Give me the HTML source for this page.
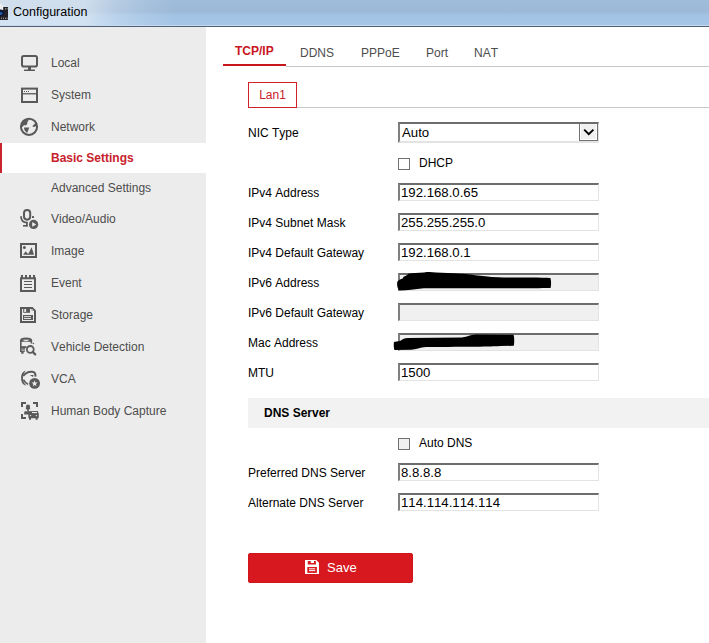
<!DOCTYPE html>
<html>
<head>
<meta charset="utf-8">
<title>Configuration</title>
<style>
*{box-sizing:border-box;margin:0;padding:0}
html,body{width:709px;height:643px;overflow:hidden;background:#fff}
body{font-family:"Liberation Sans",sans-serif;font-size:12px;color:#000;position:relative;font-kerning:none;font-feature-settings:"kern" 0}
#title{position:absolute;left:0;top:0;width:709px;height:26px;background:linear-gradient(to bottom,#9fbcda 0%,#9cb9d8 46%,#a3c3e4 58%,#a5c6e7 100%);}
#title .glow{position:absolute;left:0;top:0;width:200px;height:26px;background:linear-gradient(to right,rgba(255,255,255,.52) 0,rgba(255,255,255,.5) 85px,rgba(255,255,255,.25) 115px,rgba(255,255,255,.1) 145px,rgba(255,255,255,0) 175px)}
#title .txt{position:absolute;left:13px;top:4.5px;font-size:12.5px;line-height:15px;color:#000}
#titleline{position:absolute;left:0;top:25px;width:709px;height:2px;background:linear-gradient(to bottom,#c9daec 0,#c9daec 50%,#4f6178 50%,#4f6178 100%)}
#side{position:absolute;left:0;top:27px;width:206px;height:616px;background:#ececec}
.mi{position:absolute;left:51px;font-size:12px;color:#4d4d4d;line-height:14px;white-space:nowrap}
.sel{position:absolute;left:0;top:143px;width:206px;height:30px;background:#fff;border-left:2px solid #c9232b}
.ico{position:absolute;left:20px;width:20px;height:20px}
#main{position:absolute;left:206px;top:27px;width:503px;height:616px;background:#fff}
.tab{position:absolute;top:46px;font-size:12px;color:#4d4d4d;line-height:14px}
.lbl{position:absolute;left:248px;font-size:12px;color:#000;line-height:14px;white-space:nowrap}
.inp{position:absolute;left:398px;width:201px;height:18px;border:1px solid #e3e3e3;border-top:2px solid #6d6d6d;border-left:2px solid #7f7f7f;background:#fff;font-size:13.2px;line-height:15px;padding-left:1px;color:#000;white-space:nowrap}
.inp.dis{background:#f0f0f0}
.cb{position:absolute;left:398px;width:12px;height:12px;border:1px solid #707070;background:#fff}
</style>
</head>
<body>
<div id="title"><div class="glow"></div>
<svg width="10" height="26" viewBox="0 0 10 26" style="position:absolute;left:0;top:0">
<rect x="0" y="7" width="8" height="13" fill="#222224"/>
<rect x="5" y="8" width="1" height="1.5" fill="#8a8a8a"/><rect x="6.6" y="8" width="1" height="1.5" fill="#8a8a8a"/>
<rect x="1" y="17.6" width="1" height="1.5" fill="#8a8a8a"/><rect x="3" y="17.6" width="1" height="1.5" fill="#8a8a8a"/><rect x="5" y="17.6" width="1" height="1.5" fill="#8a8a8a"/><rect x="6.6" y="17.6" width="1" height="1.5" fill="#8a8a8a"/>
<path d="M0,3.6 Q2.8,4 3.2,7 L3.2,10.6 L0,10.6 Z" fill="#ededf0"/>
<ellipse cx="0.4" cy="12.8" rx="3.8" ry="3.2" fill="#0b1a38"/>
<ellipse cx="0.2" cy="13.6" rx="2.3" ry="1.3" fill="#2a62b5"/>
</svg>
<div class="txt">Configuration</div></div>
<div id="titleline"></div>
<div id="side">
</div>
<div class="sel"></div>
<div class="mi" style="top:56px">Local</div>
<div class="mi" style="top:88px">System</div>
<div class="mi" style="top:120px">Network</div>
<div class="mi" style="top:151px;color:#c8202a;font-weight:bold">Basic Settings</div>
<div class="mi" style="top:181px">Advanced Settings</div>
<div class="mi" style="top:212px">Video/Audio</div>
<div class="mi" style="top:244px">Image</div>
<div class="mi" style="top:276px">Event</div>
<div class="mi" style="top:308px">Storage</div>
<div class="mi" style="top:340px">Vehicle Detection</div>
<div class="mi" style="top:372px">VCA</div>
<div class="mi" style="top:404px">Human Body Capture</div>


<svg id="icons" width="206" height="643" viewBox="0 0 206 643" style="position:absolute;left:0;top:0">
<g fill="#595959" stroke="none">
<!-- Local -->
<rect x="22" y="56" width="15" height="10.5" rx="1.8" fill="none" stroke="#595959" stroke-width="2"/>
<rect x="28" y="67" width="3" height="3"/>
<rect x="24" y="69.5" width="11" height="1.6" rx="0.6"/>
<!-- System -->
<rect x="22" y="88.6" width="15" height="13.4" fill="none" stroke="#595959" stroke-width="2"/>
<rect x="22" y="93.1" width="15" height="1.3"/>
<rect x="24" y="91" width="1" height="1"/><rect x="26" y="91" width="1" height="1"/><rect x="28" y="91" width="1" height="1"/>
<!-- Network -->
<circle cx="29" cy="126.8" r="8.1" fill="none" stroke="#595959" stroke-width="2"/>
<path d="M21.5,126.5 L22,122.5 L24.5,119.8 L28.3,118.8 L28.6,120.2 L27.4,122 L27.2,124 L25.8,125.4 L24,125 L22.5,127 Z"/>
<path d="M24,127.6 L29.4,127.4 L28.6,129.2 L27.3,132.8 L26.2,132.2 L24.4,130 Z"/>
<path d="M32.3,126.2 L34.2,124.2 L36.2,122.2 L37,124.5 L35.6,126.4 L33.6,126.9 Z"/>
<!-- Video/Audio -->
<rect x="24" y="210" width="6.2" height="9.7" rx="3.1" fill="none" stroke="#595959" stroke-width="2"/>
<path d="M21,216.2 C21,220.6 24,222.6 27.6,222.6" fill="none" stroke="#595959" stroke-width="1.8"/>
<rect x="26" y="222" width="1.7" height="4.4"/>
<rect x="23" y="225" width="4.6" height="1.6"/>
<rect x="32" y="216.1" width="2" height="1.9"/>
<circle cx="33.6" cy="224.4" r="4.6"/>
<path d="M32.2,222 L36.2,224.4 L32.2,226.8 Z" fill="#ececec"/>
<!-- Image -->
<rect x="21" y="244" width="15" height="13" fill="none" stroke="#595959" stroke-width="2"/>
<circle cx="24.4" cy="247.4" r="1.5"/>
<path d="M23,254.8 L25.8,251.2 L27.4,253.4 L28.6,253.4 L31.6,247.2 L34,254.8 Z"/>
<!-- Event -->
<rect x="21" y="278.3" width="14" height="12.7" fill="none" stroke="#595959" stroke-width="2"/>
<rect x="21" y="275" width="2" height="3"/><rect x="25" y="275" width="2" height="3"/><rect x="29" y="275" width="2" height="3"/><rect x="33" y="275" width="2" height="3"/>
<rect x="24" y="281" width="8" height="1"/><rect x="24" y="284" width="8" height="1"/><rect x="24" y="287" width="8" height="1"/>
<!-- Storage -->
<path d="M21,308 L32.2,308 L35,310.8 L35,322 L21,322 Z" fill="none" stroke="#595959" stroke-width="2"/>
<rect x="23.2" y="308" width="6.8" height="4.8"/>
<rect x="24.2" y="309" width="1.9" height="3" fill="#e4e4e4"/>
<rect x="31.2" y="309.2" width="1.8" height="1.6" fill="#b0b0b0"/>
<rect x="23" y="315" width="10" height="5"/>
<rect x="24" y="316.2" width="7" height="0.9" fill="#ececec"/><rect x="24" y="318.1" width="7" height="0.9" fill="#ececec"/>
<!-- Vehicle detection -->
<path d="M20.8,352 L20.8,340.6 Q20.8,338.6 26,338.4 Q31.4,338.6 31.4,340.6 L31.4,343.6" fill="none" stroke="#595959" stroke-width="1.6"/>
<rect x="20.5" y="339.6" width="11" height="2.2"/>
<ellipse cx="26" cy="340.6" rx="2.8" ry="0.6" fill="#ececec"/>
<rect x="20.5" y="346.2" width="6" height="1.8"/>
<path d="M21,348 L25.4,348 L24.6,350.4 L21,349.2 Z" fill="#7a7a7a"/>
<rect x="20.8" y="350.6" width="4" height="1.3"/>
<rect x="21.2" y="351.5" width="2.4" height="2.2"/>
<circle cx="30.3" cy="349.4" r="3.4" fill="none" stroke="#595959" stroke-width="1.8"/>
<path d="M32.8,352 L35.2,354.4" stroke="#595959" stroke-width="2.2" stroke-linecap="round"/>
<circle cx="33.4" cy="343.5" r="0.8"/>
<!-- VCA -->
<path d="M25.6,370.7 C22.4,371.2 21,374.6 21.1,378.3 C21.2,382 22.6,385.2 26.4,385.6 C24.2,383.6 22.9,381.2 22.9,378.2 C22.9,375.4 23.9,372.9 25.6,370.7 Z"/>
<path d="M23.4,379.6 C24.4,381.6 26,383.2 28.2,384.4" fill="none" stroke="#595959" stroke-width="1.6"/>
<path d="M23.2,376 C25,373.4 28.4,371.5 32,371.7 C34.8,371.9 35.9,374 35.3,376.6" fill="none" stroke="#595959" stroke-width="2"/>
<path d="M29.8,375 L33.6,375 L33,377 Z"/>
<circle cx="34.6" cy="383.4" r="5.4"/>
<path d="M34.6,380.3 L35.4,382.5 L37.7,382.6 L35.9,384 L36.5,386.2 L34.6,384.9 L32.7,386.2 L33.3,384 L31.5,382.6 L33.8,382.5 Z" fill="#ececec"/>
<!-- Human body capture -->
<path d="M26,403 L22,403 L22,407" fill="none" stroke="#595959" stroke-width="2"/>
<path d="M33,403 L37,403 L37,407" fill="none" stroke="#595959" stroke-width="2"/>
<path d="M22,414 L22,418 L26,418" fill="none" stroke="#595959" stroke-width="2"/>
<ellipse cx="28" cy="407" rx="2.1" ry="2.4"/>
<path d="M25.4,409.2 L26.6,407.8 L29.4,407.8 L30.6,409.2 Z"/>
<rect x="27.2" y="408.5" width="1.6" height="3"/>
<path d="M24.2,412.2 Q24.2,411.2 25.4,411.2 L37.4,411 Q38.2,411 38.2,412 L38.2,414.6 L24.2,414.6 Z"/>
<rect x="28.4" y="413" width="10.4" height="5.2" rx="0.6"/>
<rect x="32" y="412" width="5" height="1.1" fill="#ececec"/>
<circle cx="30.6" cy="415.6" r="0.7" fill="#ececec"/><circle cx="36.4" cy="415.6" r="0.7" fill="#ececec"/>
<rect x="29" y="418" width="2" height="1.8"/><rect x="35.6" y="418" width="2" height="1.8"/>
</g>
</svg>

<!-- tabs -->
<div class="tab" style="left:235px;top:44px;color:#c9161d;font-weight:bold">TCP/IP</div>
<div class="tab" style="left:300px">DDNS</div>
<div class="tab" style="left:361px">PPPoE</div>
<div class="tab" style="left:426px">Port</div>
<div class="tab" style="left:474px">NAT</div>
<div style="position:absolute;left:223px;top:64px;width:63px;height:2px;background:#c9161d"></div>
<div style="position:absolute;left:286px;top:66px;width:423px;height:1px;background:#c8c8c8"></div>
<!-- Lan1 -->
<div style="position:absolute;left:248px;top:82px;width:49px;height:26px;border:1px solid #d0202a;color:#c8202a;font-size:12px;line-height:24px;text-align:center">Lan1</div>
<div style="position:absolute;left:297px;top:107px;width:412px;height:1px;background:#c8c8c8"></div>

<div class="lbl" style="top:126px">NIC Type</div>
<div class="inp" style="top:122px;height:21px;line-height:17px;padding-left:2px;border-bottom-width:2px">Auto</div>
<div style="position:absolute;left:579px;top:124px;width:19px;height:17px;background:#f0f0f0;border:1px solid #707070;border-top:0;box-shadow:inset 1px 0 0 #fff,inset -1px -1px 0 #fff"></div>
<svg width="14" height="10" viewBox="582 127 14 10" style="position:absolute;left:582px;top:127px"><path d="M584.2,129.6 L588.8,134.2 L593.4,129.6" fill="none" stroke="#000" stroke-width="1.9"/></svg>
<div class="cb" style="top:158px"></div>
<div class="lbl" style="left:419px;top:156px">DHCP</div>
<div class="lbl" style="top:186px">IPv4 Address</div>
<div class="inp" style="top:183px">192.168.0.65</div>
<div class="lbl" style="top:216px">IPv4 Subnet Mask</div>
<div class="inp" style="top:213px">255.255.255.0</div>
<div class="lbl" style="top:246px">IPv4 Default Gateway</div>
<div class="inp" style="top:243px">192.168.0.1</div>
<div class="lbl" style="top:276px">IPv6 Address</div>
<div class="inp dis" style="top:273px"></div>
<div class="lbl" style="top:306px">IPv6 Default Gateway</div>
<div class="inp dis" style="top:303px"></div>
<div class="lbl" style="top:336px">Mac Address</div>
<div class="inp dis" style="top:333px"></div>
<div class="lbl" style="top:366px">MTU</div>
<div class="inp" style="top:363px">1500</div>


<svg width="240" height="100" viewBox="380 262 240 100" style="position:absolute;left:380px;top:262px">
<path d="M397.4,281.4 L399.4,279.8 L402.6,278.6 L403.6,276.8 L406.4,275.4 L408.4,273.8 C412,273 418,272.6 424,272.4 C428,271.8 432,271.8 436,272.6 C444,273.2 452,273.2 458,273.4 C466,273.8 470,274.4 478,275.4 C488,276.8 496,277.2 504,277.4 C520,277.6 540,277.2 550.4,278 C551.4,281 551.2,285 550.6,288 C530,288.4 470,288.2 424,288.2 C414,289 406,290.6 399,290.4 C397,287.6 396.8,284 397.4,281.4 Z" fill="#000"/>
<path d="M394,342 C395,341.4 398,341.6 400,341 C402,339.4 404,338.2 408,338 L462,337.6 C468,336.6 470,334.8 476,334.6 L513.6,334.7 C514.4,338 514.4,342 513.8,345.8 L500,346 C490,346.8 470,346.8 426,347 C420,347.4 416,349.4 411,349.8 L394.4,350 C393.6,347 393.6,344 394,342 Z" fill="#000"/>
</svg>
<div style="position:absolute;left:248px;top:398px;width:461px;height:30px;background:#f2f2f2"></div>
<div class="lbl" style="left:264px;top:406px;font-weight:bold">DNS Server</div>
<div class="cb" style="top:438px;background:#f0f0f0"></div>
<div class="lbl" style="left:419px;top:436px">Auto DNS</div>
<div class="lbl" style="top:466px">Preferred DNS Server</div>
<div class="inp" style="top:463px">8.8.8.8</div>
<div class="lbl" style="top:496px">Alternate DNS Server</div>
<div class="inp" style="top:493px">114.114.114.114</div>

<div style="position:absolute;left:248px;top:553px;width:165px;height:30px;background:#d7191f;border:1px solid #d0151b;border-radius:2px"></div>
<svg width="16" height="16" viewBox="304 559 16 16" style="position:absolute;left:304px;top:559px">
<path d="M305,560 L316.2,560 L319,562.8 L319,574 L305,574 Z" fill="#fff"/>
<path d="M307.8,561.1 L310.7,561.1 L310.7,563 L314,563 L314,561.1 L315.9,561.1 L315.9,564.6 L307.8,564.6 Z" fill="#d7191f"/>
<rect x="307.3" y="567" width="9.6" height="5.9" fill="#d7191f"/>
<rect x="309" y="568.3" width="6.2" height="1" fill="#fff"/>
<rect x="309" y="570.1" width="6.2" height="1" fill="#fff"/>
</svg>
<div style="position:absolute;left:327px;top:560px;color:#fff;font-size:13px;line-height:16px">Save</div>
</body>
</html>
